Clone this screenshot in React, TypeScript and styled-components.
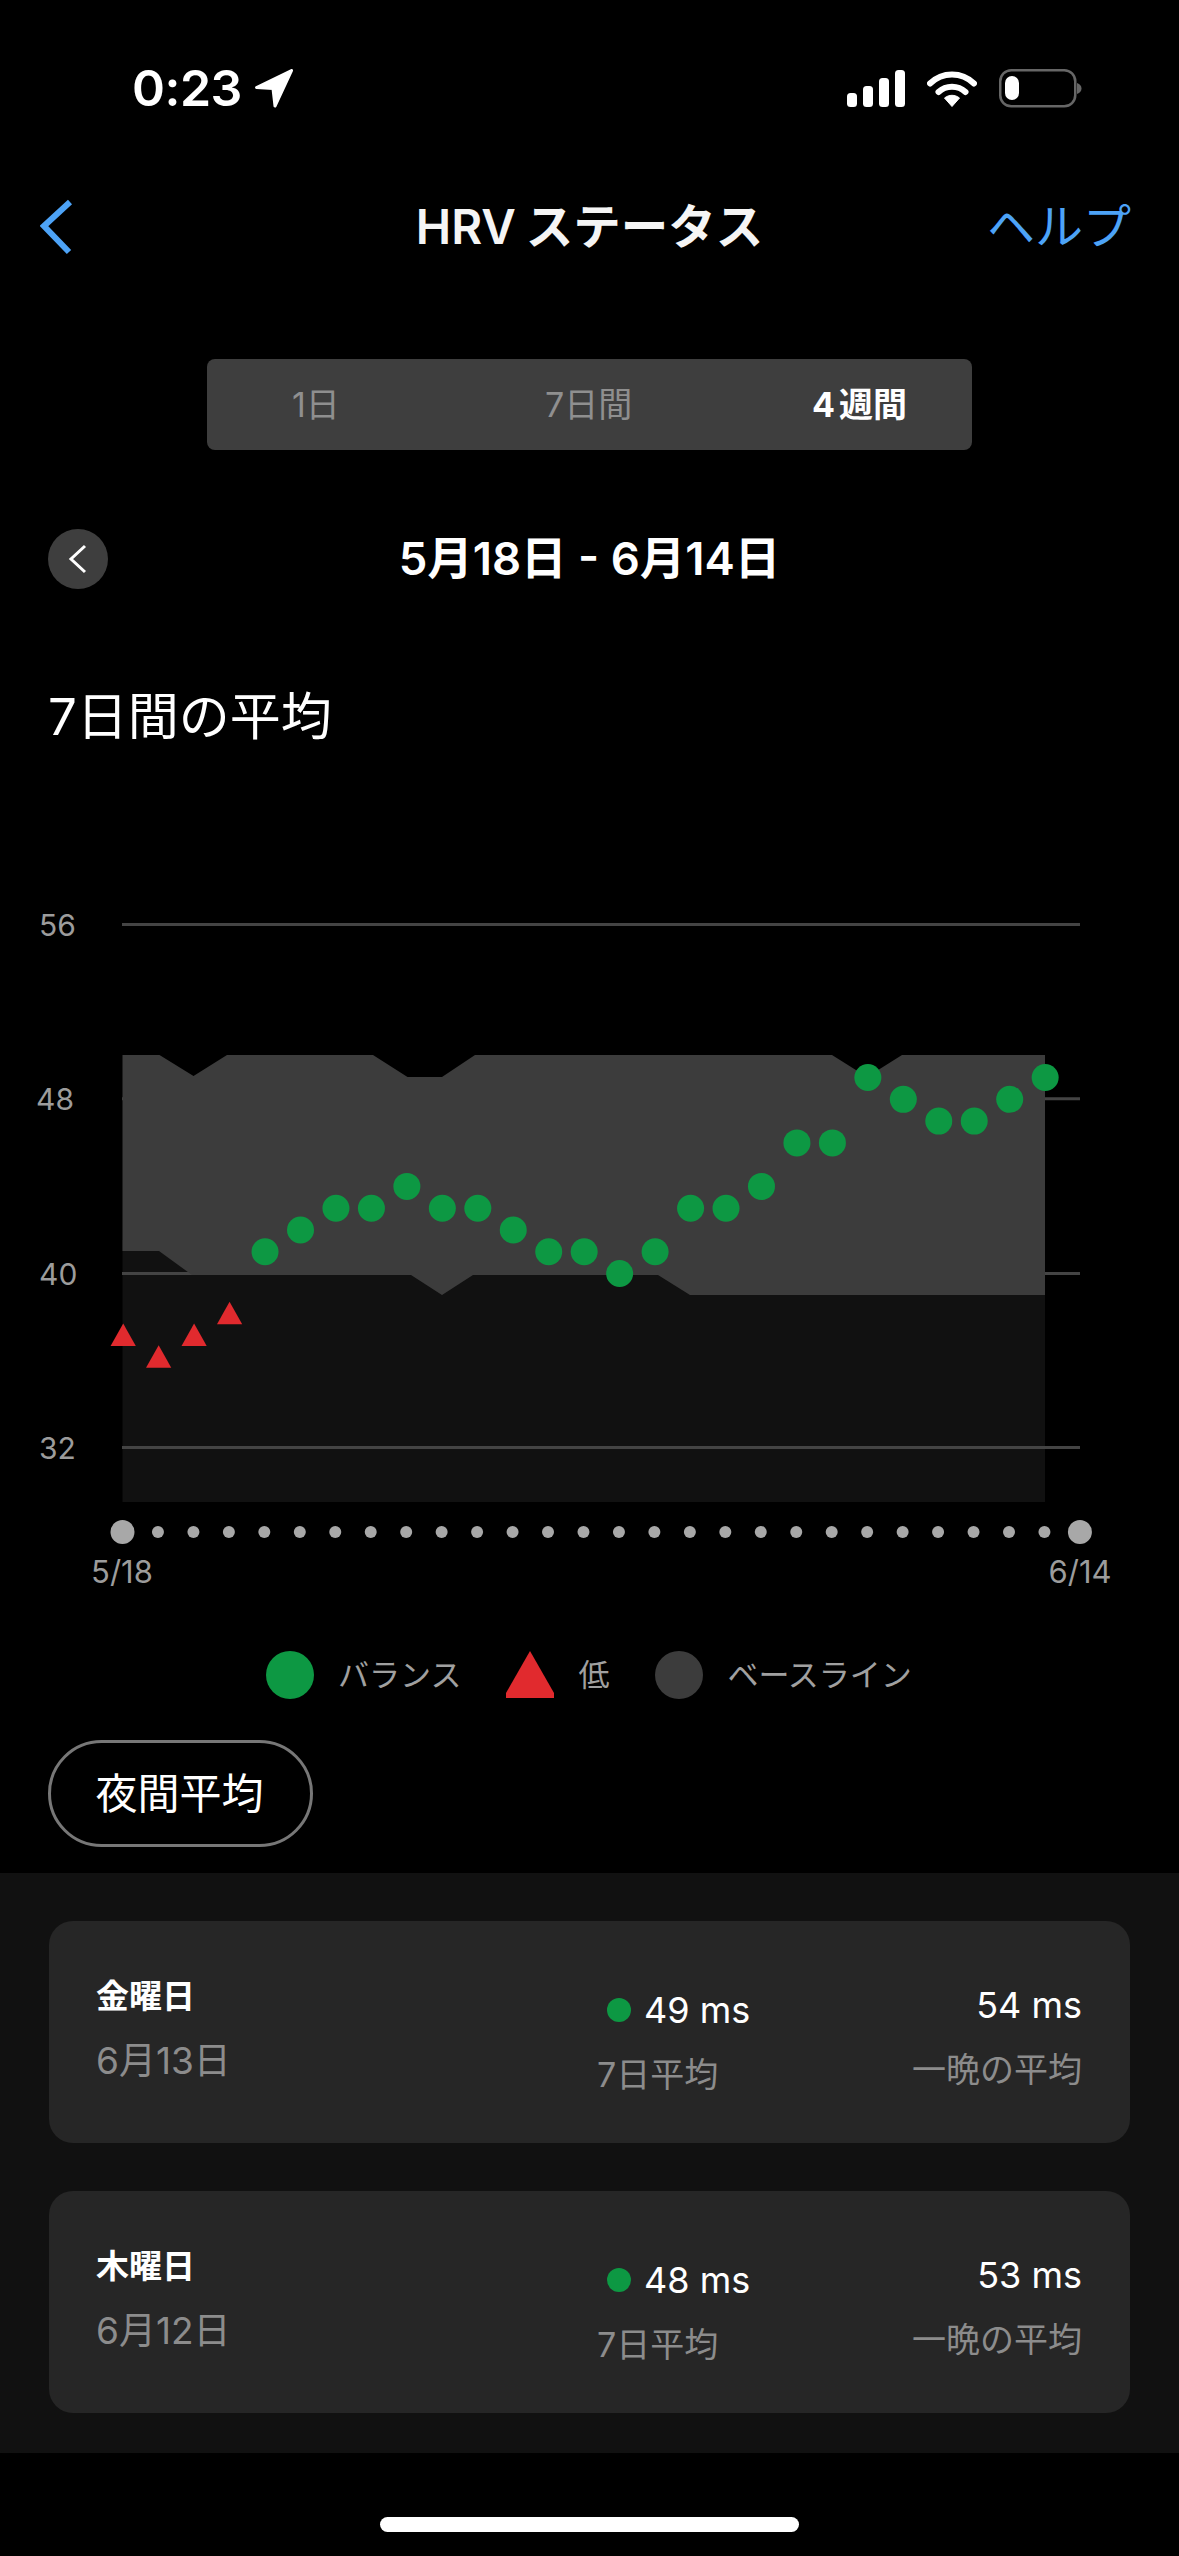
import React from 'react';
import styled, { createGlobalStyle } from 'styled-components';

const Global = createGlobalStyle`
  html, body { margin: 0; padding: 0; background: #000; }
  body { font-family: Inter, "Noto Sans CJK JP", "Noto Sans", sans-serif; color: #fff; }
  * { box-sizing: border-box; }
`;

const Page = styled.div`
  width: 1179px;
  height: 2556px;
  background: #000;
  display: flex;
  flex-direction: column;
  overflow: hidden;
`;

const StatusBar = styled.div`
  height: 176px;
  padding: 0 97px 0 132px;
  display: flex;
  align-items: center;
  justify-content: space-between;
`;
const TimeGroup = styled.div`
  display: flex;
  align-items: center;
  gap: 12px;
`;
const Time = styled.span`
  font-size: 50px;
  line-height: 60px;
  font-weight: 600;
  letter-spacing: -0.5px;
`;
const StatusIcons = styled.div`
  display: flex;
  align-items: center;
  gap: 22px;
`;

const NavBar = styled.div`
  height: 102px;
  padding: 0 48px;
  display: grid;
  grid-template-columns: 1fr auto 1fr;
  align-items: center;
`;
const BackSlot = styled.div`
  margin-left: -8px;
  display: flex;
`;
const NavTitle = styled.div`
  font-size: 47.5px;
  line-height: 60px;
  font-weight: 600;
  color: #f5f5f5;
  white-space: nowrap;
  word-spacing: -2px;
`;
const NavHelp = styled.div`
  font-size: 48px;
  line-height: 60px;
  color: #4da3f7;
  text-align: right;
`;

const Segments = styled.div`
  margin: 81px 0 0 207px;
  width: 765px;
  height: 91px;
  border-radius: 8px;
  background: #3e3e3e;
  padding: 0 65px 0 85px;
  display: grid;
  grid-template-columns: 253px auto 1fr;
  align-items: center;
  font-size: 34px;
`;
const Segment = styled.div<{ $active?: boolean; $align: string }>`
  text-align: ${p => p.$align};
  color: ${p => (p.$active ? '#fff' : '#8f8f8f')};
  font-weight: ${p => (p.$active ? 700 : 400)};
  line-height: 44px;
  word-spacing: -4px;
  white-space: nowrap;
`;

const DateRow = styled.div`
  margin: 78px 48px 0;
  height: 60px;
  display: grid;
  grid-template-columns: 60px 1fr 60px;
  align-items: center;
`;
const RoundButton = styled.div`
  width: 60px;
  height: 60px;
  border-radius: 50%;
  background: #3e3e3e;
  display: flex;
  align-items: center;
  justify-content: center;
`;
const DateRange = styled.div`
  font-size: 45.5px;
  line-height: 62px;
  font-weight: 600;
  text-align: center;
`;

const SectionTitle = styled.div`
  margin: 99px 0 0 48px;
  font-size: 51px;
  line-height: 60px;
`;

const ChartSvg = styled.svg`
  display: block;
  margin-top: 133px;
  flex: none;
`;
const AxisText = styled.text`
  fill: #9c9c9c;
  font-size: 30px;
  font-family: Inter, "Noto Sans", sans-serif;
  dominant-baseline: central;
`;
const DateText = styled.text`
  fill: #9c9c9c;
  font-size: 31px;
  font-family: Inter, "Noto Sans", sans-serif;
  text-anchor: middle;
  dominant-baseline: central;
`;

const Legend = styled.div`
  margin: 51px 0 0 266px;
  height: 48px;
  display: flex;
  align-items: center;
`;
const LegendDot = styled.span<{ $color: string }>`
  width: 48px;
  height: 48px;
  border-radius: 50%;
  background: ${p => p.$color};
  flex: none;
`;
const LegendLabel = styled.span<{ $gap: number }>`
  margin: 0 ${p => p.$gap}px 0 24px;
  font-size: 31px;
  line-height: 48px;
  color: #a0a0a0;
  white-space: nowrap;
`;

const PillButton = styled.div`
  margin: 41px 0 0 48px;
  width: 265px;
  height: 107px;
  border: 3px solid #777;
  border-radius: 54px;
  padding-right: 2px;
  display: flex;
  align-items: center;
  justify-content: center;
  font-size: 42px;
  line-height: 60px;
`;

const ListSection = styled.div`
  margin-top: 26px;
  height: 580px;
  background: #111;
  padding: 48px 49px 40px;
  display: flex;
  flex-direction: column;
  gap: 48px;
`;
const Card = styled.div`
  height: 222px;
  border-radius: 24px;
  background: #262626;
  padding: 0 48px 0 47px;
  display: grid;
  grid-template-columns: 501px auto 1fr;
`;
const CardColumn = styled.div<{ $top: number; $right?: boolean }>`
  padding-top: ${p => p.$top}px;
  display: flex;
  flex-direction: column;
  gap: 25px;
  align-items: ${p => (p.$right ? 'flex-end' : 'flex-start')};
`;
const DayName = styled.div`
  font-size: 33px;
  line-height: 40px;
  font-weight: 700;
`;
const DateLabel = styled.div`
  font-size: 37px;
  line-height: 40px;
  color: #8c8c8c;
  white-space: nowrap;
`;
const Muted = styled.div`
  font-size: 34px;
  line-height: 40px;
  color: #8c8c8c;
  white-space: nowrap;
`;
const ValueRow = styled.div`
  display: flex;
  align-items: center;
  gap: 13px;
  padding-left: 10px;
`;
const StatusDot = styled.span`
  width: 24px;
  height: 24px;
  border-radius: 50%;
  background: #0d9843;
`;
const Value = styled.div`
  font-size: 36px;
  line-height: 40px;
  white-space: nowrap;
`;

const HomeBar = styled.div`
  margin: 64px 0 0 380px;
  width: 419px;
  height: 15px;
  border-radius: 8px;
  background: #fff;
`;

const X0 = 122.5;
const STEP = 35.46;
const xAt = (i: number) => X0 + STEP * i;
const xPoint = (i: number) => xAt(i) + 0.7;
const yAt = (v: number) => 1273.5 - (v - 40) * 21.77;

const lows = [38, 37, 38, 39];
const balanced = [41, 42, 43, 43, 44, 43, 43, 42, 41, 41, 40, 41, 43, 43, 44, 46, 46, 49, 48, 47, 47, 48, 49];
const ticks = [
  { label: '56', y: 924.5, x: 39 },
  { label: '48', y: 1098.8, x: 36 },
  { label: '40', y: 1273.5, x: 39 },
  { label: '32', y: 1447.5, x: 39 },
];

const bandPoints =
  '122.5,1055 159.5,1055 193.5,1076 227,1055 373,1055 407.5,1077 442,1077 475,1055 832,1055 867,1077 902,1055 1045,1055 1045,1295 690,1295 658,1275 473,1275 442,1295 411,1275 192,1275 159,1251 122.5,1251';

const Chart = () => (
  <ChartSvg width={1179} height={720} viewBox="0 880 1179 720">
    <rect x={122.5} y={1240} width={922.5} height={262} fill="#111" />
    {ticks.map(t => (
      <line key={t.label} x1={122} x2={1080} y1={t.y} y2={t.y} stroke="#444" strokeWidth={3} />
    ))}
    <polygon points={bandPoints} fill="#3c3c3c" />
    {ticks.map(t => (
      <AxisText key={t.label} x={t.x} y={t.y}>
        {t.label}
      </AxisText>
    ))}
    {lows.map((v, i) => {
      const x = xPoint(i);
      const y = yAt(v) + 6.5;
      return <polygon key={i} points={`${x},${y} ${x + 12.6},${y + 22.4} ${x - 12.6},${y + 22.4}`} fill="#e12a2e" />;
    })}
    {balanced.map((v, i) => (
      <circle key={i} cx={xPoint(i + 4)} cy={yAt(v)} r={13.5} fill="#0d9843" />
    ))}
    {Array.from({ length: 28 }, (_, i) => (
      <circle key={i} cx={xAt(i)} cy={1532} r={i === 0 || i === 27 ? 12 : 6} fill="#a8a8a8" />
    ))}
    <DateText x={122} y={1571}>5/18</DateText>
    <DateText x={1080} y={1571}>6/14</DateText>
  </ChartSvg>
);

const LocationArrow = () => (
  <svg width={40} height={40} viewBox="0 0 40 40" style={{ marginTop: 1 }}>
    <path
      d="M2.5 18.5 L37.5 1.5 L21 37 L19 19.5 Z"
      fill="#fff"
      stroke="#fff"
      strokeWidth={3}
      strokeLinejoin="round"
    />
  </svg>
);

const SignalIcon = () => (
  <svg width={58} height={37} viewBox="0 0 58 37">
    <rect x={0} y={23} width={10} height={14} rx={3.5} fill="#fff" />
    <rect x={16} y={16} width={10} height={21} rx={3.5} fill="#fff" />
    <rect x={32} y={8} width={10} height={29} rx={3.5} fill="#fff" />
    <rect x={48} y={0} width={10} height={37} rx={3.5} fill="#fff" />
  </svg>
);

const WifiIcon = () => (
  <svg width={50} height={37} viewBox="0 0 50 37">
    <path d="M3 13.5 C15.5 1.5 34.5 1.5 47 13.5" fill="none" stroke="#fff" strokeWidth={6} strokeLinecap="round" />
    <path d="M11.5 22 C19 15 31 15 38.5 22" fill="none" stroke="#fff" strokeWidth={6} strokeLinecap="round" />
    <path d="M17.5 28 C22 24.4 28 24.4 32.5 28 L25 36.5 Z" fill="#fff" stroke="#fff" strokeWidth={1} strokeLinejoin="round" />
  </svg>
);

const BatteryIcon = () => (
  <svg width={83} height={39} viewBox="0 0 83 39">
    <rect x={1.25} y={1.25} width={75} height={36} rx={11} fill="none" stroke="#666" strokeWidth={2.5} />
    <rect x={6} y={7} width={14} height={24} rx={7} fill="#fff" />
    <path d="M78 14 C81 15 82.5 17 82.5 19.5 C82.5 22 81 24 78 25 Z" fill="#666" />
  </svg>
);

const BackChevron = () => (
  <svg width={34} height={56} viewBox="0 0 34 56">
    <path d="M30 3 L4 27 L29 53" fill="none" stroke="#4da3f7" strokeWidth={6} strokeLinejoin="miter" />
  </svg>
);

const SmallChevron = () => (
  <svg width={20} height={30} viewBox="0 0 20 30">
    <path d="M17 2 L3 15 L17 28" fill="none" stroke="#fff" strokeWidth={3} />
  </svg>
);

const days = [
  { day: '金曜日', date: '6月13日', avg: '49 ms', night: '54 ms' },
  { day: '木曜日', date: '6月12日', avg: '48 ms', night: '53 ms' },
];

export default function App() {
  return (
    <Page>
      <Global />
      <StatusBar>
        <TimeGroup>
          <Time>0:23</Time>
          <LocationArrow />
        </TimeGroup>
        <StatusIcons>
          <SignalIcon />
          <WifiIcon />
          <BatteryIcon />
        </StatusIcons>
      </StatusBar>
      <NavBar>
        <BackSlot>
          <BackChevron />
        </BackSlot>
        <NavTitle>HRV ステータス</NavTitle>
        <NavHelp>ヘルプ</NavHelp>
      </NavBar>
      <Segments>
        <Segment $align="left">1日</Segment>
        <Segment $align="center">7日間</Segment>
        <Segment $align="right" $active>4 週間</Segment>
      </Segments>
      <DateRow>
        <RoundButton>
          <SmallChevron />
        </RoundButton>
        <DateRange>5月18日 - 6月14日</DateRange>
      </DateRow>
      <SectionTitle>7日間の平均</SectionTitle>
      <Chart />
      <Legend>
        <LegendDot $color="#0d9843" />
        <LegendLabel $gap={45}>バランス</LegendLabel>
        <svg width={48} height={48} viewBox="0 0 48 48">
          <polygon points="24,0 48,42 48,47 0,47 0,42" fill="#e12a2e" />
        </svg>
        <LegendLabel $gap={46}>低</LegendLabel>
        <LegendDot $color="#3c3c3c" />
        <LegendLabel $gap={0}>ベースライン</LegendLabel>
      </Legend>
      <PillButton>夜間平均</PillButton>
      <ListSection>
        {days.map(d => (
          <Card key={d.day}>
            <CardColumn $top={55}>
              <DayName>{d.day}</DayName>
              <DateLabel>{d.date}</DateLabel>
            </CardColumn>
            <CardColumn $top={69}>
              <ValueRow>
                <StatusDot />
                <Value>{d.avg}</Value>
              </ValueRow>
              <Muted>7日平均</Muted>
            </CardColumn>
            <CardColumn $top={64} $right>
              <Value>{d.night}</Value>
              <Muted>一晩の平均</Muted>
            </CardColumn>
          </Card>
        ))}
      </ListSection>
      <HomeBar />
    </Page>
  );
}
